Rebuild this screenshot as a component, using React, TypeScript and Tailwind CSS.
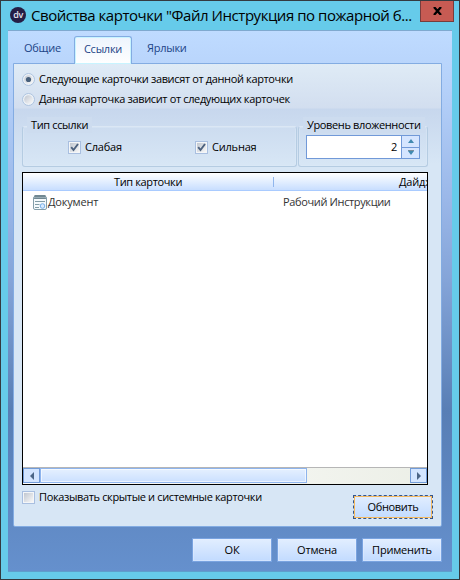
import React from "react";

const font = "font-['Open_Sans','Noto_Sans',sans-serif]";

function GroupBox({ title, className, children }: { title: React.ReactNode; className: string; children: React.ReactNode }) {
  return (
    <fieldset className={`relative h-[41px] min-w-0 rounded-[3px] border border-[#b5cce2] border-t-[#dbe7f4] shadow-[inset_0_0_0_1px_#dfebf766] ${className}`}>
      <span className="absolute -top-[10px] left-[4px] h-[16px] bg-[#cddcef] px-[4px] leading-[16px] whitespace-nowrap">{title}</span>
      {children}
    </fieldset>
  );
}

function Check({ checked, label, className = "" }: { checked?: boolean; label: string; className?: string }) {
  return (
    <label className={`flex h-[13px] items-center ${className}`}>
      <span className="flex h-[13px] w-[13px] shrink-0 items-center justify-center border border-[#a9bfe0] bg-[#f4f6f8]">
        <svg width="9" height="9" viewBox="0 0 9 9">
          <defs>
            <linearGradient id="box" x1="0" y1="0" x2="1" y2="1">
              <stop stopColor="#c1c7d0" />
              <stop offset="1" stopColor="#f8f8f8" />
            </linearGradient>
          </defs>
          <rect width="9" height="9" fill="url(#box)" />
          {checked && <path d="M1.2 4.2L3.5 7L8 1" fill="none" stroke="#4c617e" strokeWidth="1.9" />}
        </svg>
      </span>
      <span className="ml-[4px] whitespace-nowrap">{label}</span>
    </label>
  );
}

function Radio({ checked, label }: { checked?: boolean; label: string }) {
  return (
    <label className="flex h-[20px] items-center">
      <svg width="13" height="13" viewBox="0 0 13 13" className="shrink-0">
        <defs>
          <linearGradient id="radio" x1="0" y1="0" x2="1" y2="1">
            <stop stopColor="#bfc5cf" />
            <stop offset="1" stopColor="#fafafa" />
          </linearGradient>
        </defs>
        <circle cx="6.5" cy="6.5" r="6" fill="#edf2f7" stroke="#adc3df" />
        <circle cx="6.5" cy="6.5" r="4.3" fill="url(#radio)" />
        {checked && <circle cx="6.5" cy="6.5" r="2.6" fill="#465f7b" />}
      </svg>
      <span className="ml-[4px] whitespace-nowrap">{label}</span>
    </label>
  );
}

function Button({ children, focused }: { children: React.ReactNode; focused?: boolean }) {
  return (
    <button
      className={`flex h-[24px] w-[80px] shrink-0 items-center justify-center border bg-linear-to-b from-[#e2eeff] to-[#c2dbff] ${
        focused ? "border-dashed border-[#34568c] shadow-[inset_0_0_0_1px_#f5b95f]" : "border-[#79a3e0] shadow-[inset_0_0_0_1px_#e8f1ff66]"
      }`}
    >
      {children}
    </button>
  );
}

export default function App() {
  return (
    <div className={`flex h-[580px] w-[460px] flex-col overflow-hidden border border-[#343a40] bg-[#66cbea] text-[11px] tracking-[-0.36px] text-black ${font}`}>
      <header className="flex h-[29px] shrink-0">
        <svg width="16" height="16" viewBox="0 0 16 16" className="mt-[6px] ml-[9px] shrink-0">
          <circle cx="8" cy="8" r="8" fill="#251e45" />
          <text x="8" y="11" textAnchor="middle" fill="#e4e2ee" fontSize="9" fontWeight="600" fontFamily="Open Sans">dv</text>
        </svg>
        <h1 className="mt-[4px] ml-[5px] w-[389px] text-[15px] leading-[21px] tracking-[-0.46px] whitespace-nowrap">Свойства карточки "Файл Инструкция по пожарной б...</h1>
        <button className="flex h-[21px] w-[34px] shrink-0 items-center justify-center border border-t-0 border-[#773d3d] bg-[#c75b53]">
          <svg width="9" height="8" viewBox="0 0 9 8"><path d="M1 0L8 8M8 0L1 8" stroke="black" strokeWidth="2.3" /></svg>
        </button>
      </header>

      <main className="mx-[7px] flex h-[542px] shrink-0 flex-col border-t border-b border-t-[#7fa9cf] border-b-[#5f9fcc] bg-[linear-gradient(#bfdbff_0,#b4d0f9_60px,#9ab7e8_170px,#84a4d8_250px,#587eb5_380px,#6590cd_100%)] px-[5px]">
        <nav className="flex h-[32px] shrink-0 pt-[5px] tracking-[-0.25px] text-[#1c4587]">
          <div className="w-[61px] pt-[4px] pl-[11px]">Общие</div>
          <div className="z-10 h-[28px] w-[58px] rounded-t-[3px] border border-b-0 border-[#83ace2] bg-linear-to-b from-[#edf4fd] to-white pt-[4px] text-center shadow-[inset_0_0_0_1px_#c8f4ff]">Ссылки</div>
          <div className="pt-[4px] pl-[15px]">Ярлыки</div>
        </nav>

        <section className="h-[464px] w-[429px] shrink-0 rounded-b-[2px] border border-[#83ace2] bg-[linear-gradient(#dfebf6_0,#d2deef_44px,#c7d7ed_45px,#d7e6f5_100px,#d7e6f5_100%)] px-[8px] pt-[5px]">
          <Radio checked label="Следующие карточки зависят от данной карточки" />
          <Radio label="Данная карточка зависит от следующих карточек" />
          <div className="mt-[17px] flex gap-px">
            <GroupBox title="Тип ссылки" className="w-[275px]">
              <div className="flex pt-[14px] pl-[45px] tracking-[-0.2px]">
                <Check checked label="Слабая" className="w-[127px]" />
                <Check checked label="Сильная" />
              </div>
            </GroupBox>
            <GroupBox title="Уровень вложенности" className="w-[130px]">
              <div className="mt-[8px] ml-[7px] flex h-[24px] w-[114px] border border-[#7199d8] bg-white">
                <div className="flex-1 pr-[4px] text-right leading-[22px]">2</div>
                <div className="flex w-[18px] flex-col border-l border-[#7199d8]">
                  <div className="flex flex-1 items-center justify-center border-b border-[#7199d8] bg-[#d5e5ff]"><svg width="6" height="4" viewBox="0 0 6 4"><path d="M3 0L6 4H0Z" fill="#418ab1" /></svg></div>
                  <div className="flex flex-1 items-center justify-center bg-[#d5e5ff]"><svg width="6" height="5" viewBox="0 0 6 5"><path d="M0 0H6V1H0Z" fill="#7b8d9b" /><path d="M0 1H6L3 5Z" fill="#418ab1" /></svg></div>
                </div>
              </div>
            </GroupBox>
          </div>

          <div className="mt-[5px] flex h-[313px] w-[406px] flex-col border border-black bg-white">
            <div className="flex h-[18px] shrink-0 overflow-hidden border-b border-[#a9cbff] bg-linear-to-b from-white to-[#c8deff]">
              <div className="w-[250px] shrink-0 text-center leading-[18px]">Тип карточки</div>
              <div className="mt-[4px] h-[10px] w-px shrink-0 bg-[#90b6ed]" />
              <div className="ml-[125px] leading-[18px] tracking-[-0.2px]">Дайджест</div>
            </div>
            <div className="flex h-[23px] items-center text-[#333]">
              <svg className="ml-[10px] shrink-0" width="14" height="15" viewBox="0 0 14 15">
                <rect x=".5" y="1.5" width="13" height="13" rx="1.5" fill="#f5fafc" stroke="#859eaa" />
                <path d="M1.5 0H12.5L13 4H1Z" fill="#718892" />
                <path d="M1 2.5H13" stroke="#a9bcc4" strokeWidth=".7" />
                <path d="M2 6.5H12M2 9.5H6.5M2 12.5H6" stroke="#829ca6" />
                <circle cx="9.5" cy="11" r="2.3" fill="#d9ebff" stroke="#75afe7" />
              </svg>
              <span className="ml-px w-[235px] tracking-[-0.2px]">Документ</span>
              <span>Рабочий Инструкции</span>
            </div>
            <div className="mt-auto flex h-[17px] border-t border-[#b6b6b6] bg-linear-to-r from-white to-[#ecefe7] pb-px">
              <div className="flex w-[17px] items-center justify-center border border-[#719bd8] bg-[#d3e5ff]"><svg width="4" height="8"><path d="M4 0V8L0 4Z" fill="#4b6586" /></svg></div>
              <div className="w-[267px] border border-[#8eb4ed] bg-linear-to-b from-[#e5f0ff] to-[#cbe0ff] shadow-[inset_0_0_0_1px_#ffffff99]" />
              <div className="ml-auto flex w-[17px] items-center justify-center border border-[#719bd8] bg-[#d3e5ff]"><svg width="4" height="8"><path d="M0 0V8L4 4Z" fill="#4b6586" /></svg></div>
            </div>
          </div>
          <div className="flex justify-between">
            <Check label="Показывать скрытые и системные карточки" className="mt-[6px]" />
            <div className="mt-[10px]"><Button focused>Обновить</Button></div>
          </div>
        </section>
        <footer className="mt-[11px] flex gap-[5px] pl-[179px] tracking-[-0.2px]"><Button>ОК</Button><Button>Отмена</Button><Button>Применить</Button></footer>
      </main>
    </div>
  );
}
